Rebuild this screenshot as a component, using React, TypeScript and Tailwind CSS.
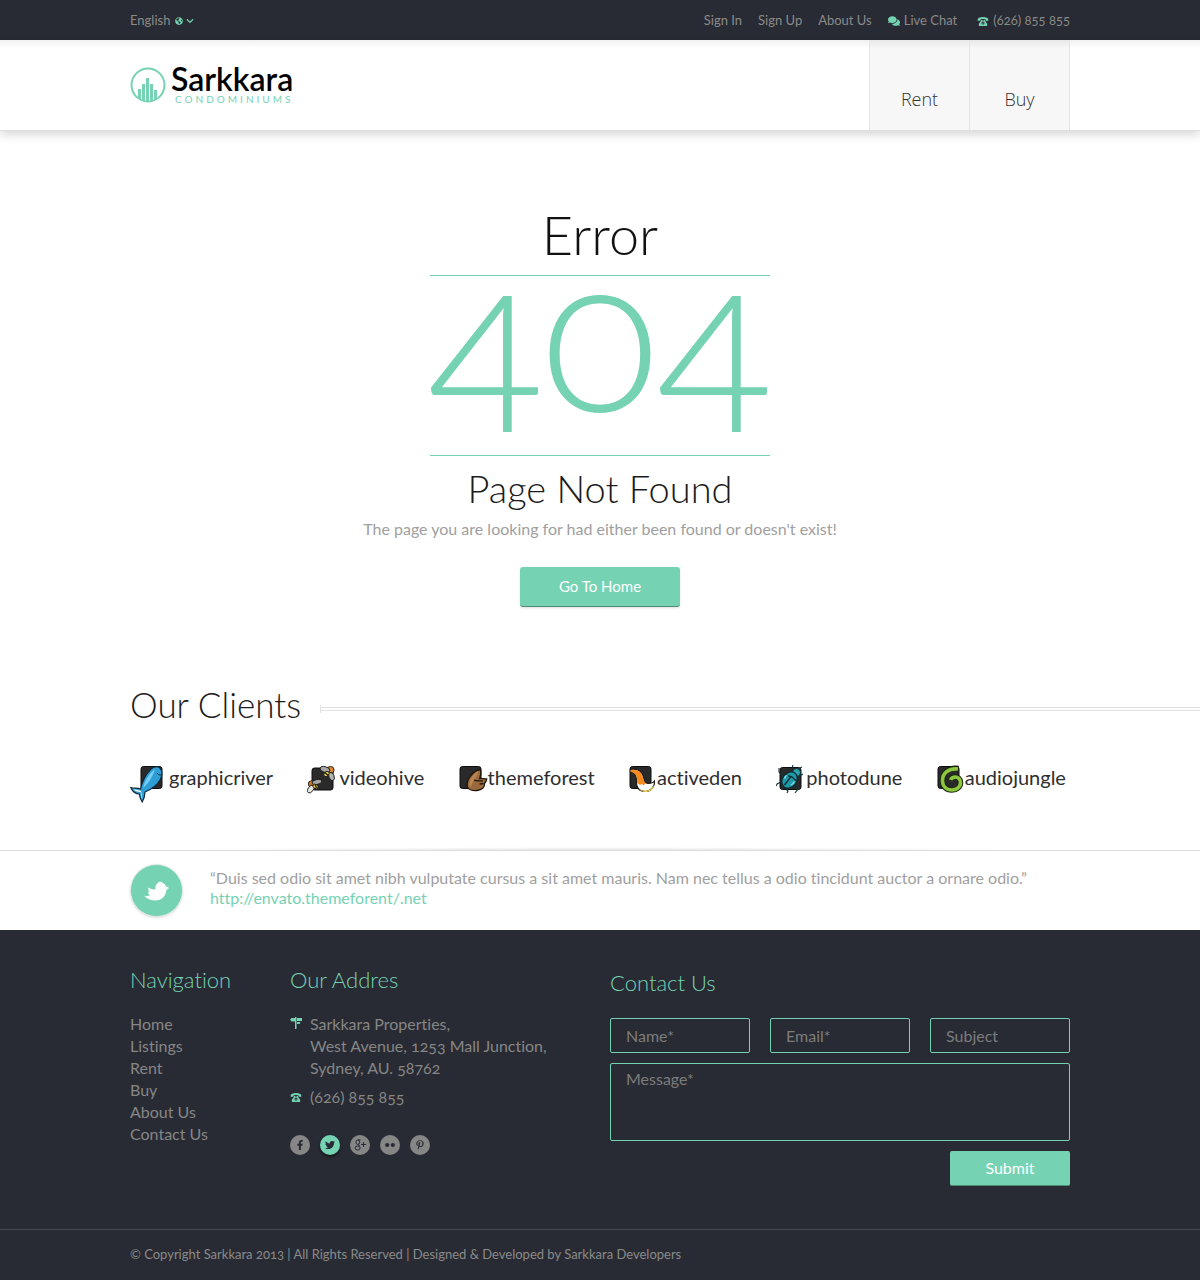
import React from 'react';
import { FaChevronDown, FaComments, FaFacebookF, FaGlobeAmericas, FaPinterestP, FaTwitter } from 'react-icons/fa';

const PhoneIcon: React.FC<{ className?: string }> = ({ className }) => (
  <svg viewBox="0 0 12 10" className={className} fill="currentColor" aria-hidden="true">
    <path d="M0 3.2C0 .9 2.6 0 6 0s6 .9 6 3.2v.9H8.8V2.6C8 2.2 4 2.2 3.2 2.6v1.5H0z" />
    <path fillRule="evenodd" d="M4 3h1v1h2V3h1v1l2.6 3.4V10H1.400V7.400L4 4zM6 5a1.700 1.700 0 1 0 0 3.400A1.700 1.700 0 0 0 6 5z" />
    <circle cx="6" cy="6.700" r=".7" />
  </svg>
);

const SignpostIcon = () => (
  <svg viewBox="0 0 12 12" className="w-3 h-3" fill="currentColor" aria-hidden="true">
    <path d="M5 0h1.500v12H5z" />
    <path d="M0 2.500 1.500 1H5v3.500H1.500z" />
    <path d="M7 1h5v3H7zM7 5h3.500l-1 2H7z" />
  </svg>
);

const LogoMark = () => (
  <svg viewBox="0 0 36 36" className="w-9 h-9" aria-hidden="true">
    <clipPath id="logo-clip">
      <circle cx="18" cy="18" r="16" />
    </clipPath>
    <circle cx="18" cy="18" r="16.500" fill="none" stroke="#75d2b3" strokeWidth="2" />
    <path
      clipPath="url(#logo-clip)"
      fill="#75d2b3"
      d="M8 22h3v14H8zM12 17h3v19h-3zM16 11h3v25h-3zM20 17h3v19h-3zM24 23h3v13h-3z"
    />
  </svg>
);

const BirdIcon = () => (
  <svg viewBox="0 0 26 20" className="w-[26px] h-5" fill="#fff" aria-hidden="true">
    <path d="M0 14.500c2.500.9 4.800.6 6.300-.4C4.500 13.500 4 12 4.200 10.800l1.500.2C4.300 9.800 4 8.200 4.500 6.600c2 1.600 4.300 2.200 6.900 1.900C11 5 12.500 1.800 16.500.2l.3 1.200L18.500.5l-.3 1.400c2.200.4 3.600 1.900 3.900 4l3.200-.5-2.200 1.800 2.300.5-3 1.100C22 15 18 19.500 11.500 19.500 7 19.500 2.600 18 0 14.500z" />
  </svg>
);

const GooglePlusIcon = () => (
  <svg viewBox="0 0 12 12" className="w-3 h-3" fill="none" stroke="currentColor" aria-hidden="true">
    <ellipse cx="3.800" cy="3.200" rx="1.900" ry="2.200" />
    <ellipse cx="3.600" cy="9" rx="2.600" ry="2" />
    <path d="M4 .9h2.500M4.500 5.200 5.500 7.500M9.500 3v5M7 5.500h5" />
  </svg>
);

const FlickrIcon = () => (
  <svg viewBox="0 0 12 12" className="w-3 h-3" fill="currentColor" aria-hidden="true">
    <circle cx="3.200" cy="6" r="2.100" />
    <circle cx="8.800" cy="6" r="2.100" />
  </svg>
);

const GraphicRiverMark = () => (
  <svg viewBox="0 0 35 38" className="w-[35px] h-[38px]" aria-hidden="true">
    <rect x="11" y="1.500" width="21" height="22" rx="2.500" fill="#2b2a2a" stroke="#0d0d0d" />
    <path
      d="M29.500 2.500c3 3 3.200 8 .5 12.500-3 5.200-9 9.500-15 12-.2 3.500-1 7-2.800 10-1.800-2.500-2.700-5-2.700-8C5.500 29 2.300 26 .8 22.500c3 .9 6.500.5 9.700 1.500 1.500-7 5-14.500 10.500-20 2.500-2.200 6-3 8.500-1.500z"
      fill="#2d9fd6"
      stroke="#102737"
      strokeWidth="1.200"
    />
    <path d="M13 23C15 15 19 9 25 4c-2 6-5 13-12 19z" fill="#78cdf2" />
    <path d="M3 24.500c3 .5 6 .5 8 1.500l1.200 8c-1.200-2-1.300-5-1.700-7-3-.2-5.500-1-7.500-2.500z" fill="#fff" />
    <path d="M27 8c1 1.500 2.300 2 4 2" fill="none" stroke="#102737" />
  </svg>
);

const VideoHiveMark = () => (
  <svg viewBox="0 0 30 38" className="w-[30px] h-[38px]" aria-hidden="true">
    <rect x="5" y="3" width="21" height="22" rx="2.500" fill="#2b2a2a" stroke="#0d0d0d" />
    <g stroke="#1a1a1a" strokeWidth=".9">
      <circle cx="23.500" cy="5" r="3.600" fill="#d9852b" />
      <ellipse cx="18" cy="4.500" rx="5" ry="2.800" transform="rotate(15 18 4.500)" fill="#a7a7a4" />
      <ellipse cx="24.500" cy="11.500" rx="2.600" ry="4.300" transform="rotate(-20 24.500 11.500)" fill="#b4b4b0" />
      <ellipse cx="19.500" cy="9" rx="3" ry="2.200" transform="rotate(-45 19.500 9)" fill="#f0d23a" />
      <circle cx="4.500" cy="19" r="3.200" fill="#c9752a" />
      <ellipse cx="10" cy="17" rx="4.800" ry="2.400" transform="rotate(-10 10 17)" fill="#a7a7a4" />
      <ellipse cx="3.800" cy="24" rx="2.600" ry="4.400" transform="rotate(35 3.800 24)" fill="#e4e4df" />
      <ellipse cx="8.500" cy="21.500" rx="2.800" ry="2" transform="rotate(35 8.500 21.500)" fill="#f0d23a" />
    </g>
    <path d="m18 7.500 3 3M8 19.500l1.500 3.500" stroke="#1a1a1a" strokeWidth="1.200" />
  </svg>
);

const ThemeForestMark = () => (
  <svg viewBox="0 0 29 38" className="w-[29px] h-[38px]" aria-hidden="true">
    <rect x="1" y="1.500" width="21" height="22" rx="2.500" fill="#2b2a2a" stroke="#0d0d0d" />
    <path
      d="M21.500 4.500c.8 3 .4 6-.8 9 2.300-.4 4.300.6 7 .4-.3 2-1 3.400-2.200 4.600.5 4-2.500 6.500-7.500 7-4.500.4-9.500-.8-9.900-5C7.800 15 13 5.500 21.500 4.500z"
      fill="#9a6a3c"
      stroke="#20150c"
      strokeWidth="1.300"
    />
    <path d="M10 21c0-6 4-12 9.500-15-1 6-6 10-7.500 16z" fill="#b98450" />
    <path d="M15 15c2 1.500 6 .8 9 .8M24.500 18.500l-4 .5" fill="none" stroke="#20150c" strokeWidth="1.300" />
  </svg>
);

const ActiveDenMark = () => (
  <svg viewBox="0 0 28 38" className="w-7 h-[38px]" aria-hidden="true">
    <rect x="1" y="1.500" width="21" height="22" rx="2.500" fill="#2b2a2a" stroke="#0d0d0d" />
    <path
      d="M1.500 4.500c7-1.500 12 2 13 8 .5 3 1.500 6 4.500 6 2.500 0 5-.5 6.500-2.500.5 6-4 10.500-9.500 10.500-6 0-9-4.500-8.500-10C8 11 6 7.500 1.500 7z"
      fill="#fff"
      stroke="#171310"
      strokeWidth="1.100"
    />
    <path d="M1.500 5c7-1.200 11.500 2 12.500 7.500.5 3 1.500 5.500 4 6.500l-2.200-.2-1 2-2-2-1.800 1.200-2.800-2C8.500 12 6.500 7.500 1.500 6.800z" fill="#f58a1f" />
    <path d="M10 24c5 3.500 12 2 15-4-.5 5-4.500 7-8.500 7-3 0-5-1-6.500-3z" fill="#f4cf4a" />
  </svg>
);

const PhotoDuneMark = () => (
  <svg viewBox="0 0 28 38" className="w-7 h-[38px]" aria-hidden="true">
    <rect x="4" y="2.500" width="21" height="22" rx="2.500" fill="#2b2a2a" stroke="#0d0d0d" />
    <path
      d="M7 11 3 7V3M5 17l-4 2-1 2M10 24l2 2-1 2M22 12l5-3M19 21l3 3-3 4M16 3l1-3M22 4l4-2"
      fill="none"
      stroke="#14363c"
      strokeWidth="1.100"
    />
    <circle cx="20.500" cy="7.500" r="4" fill="#2aa3ad" stroke="#0b2a30" />
    <ellipse cx="13.500" cy="15" rx="7" ry="8.800" transform="rotate(38 13.500 15)" fill="#1f9aa8" stroke="#0b2a30" strokeWidth="1.200" />
    <path d="M15 11.500 8.500 20M10 9.500c2 1.500 3.500 2 5 2s3 3.500 5.500 4" fill="none" stroke="#0b2a30" strokeWidth="1.300" />
    <path d="M8.500 13.500c.5-2 1.500-3 3-3.500M15 20c1.700-.9 2.700-2 3.400-3.600" fill="none" stroke="#8fe3e8" strokeWidth="1.300" />
  </svg>
);

const AudioJungleMark = () => (
  <svg viewBox="0 0 28 38" className="w-7 h-[38px]" aria-hidden="true">
    <rect x="1" y="1.500" width="21" height="22" rx="2.500" fill="#2b2a2a" stroke="#0d0d0d" />
    <path
      d="M21.500 3.500C12 2 5.500 8 5.500 15.500c0 6 4 9.500 9.300 9.500 5 0 8.700-3.200 8.700-7.500 0-3.800-2.800-5.700-5.800-5.400-2.200.2-3.700 1.400-4.200 3.400"
      fill="none"
      stroke="#17230b"
      strokeWidth="5.600"
    />
    <path
      d="M21 4C12 3 5.500 8 5.500 15.500c0 6 4 9.500 9.300 9.500 5 0 8.700-3.200 8.700-7.500 0-3.800-2.800-5.700-5.800-5.400-2 .2-3.500 1.200-4 2.900"
      fill="none"
      stroke="#8cc63f"
      strokeWidth="3.600"
    />
  </svg>
);

const clients = [
  { name: 'graphicriver', mark: GraphicRiverMark, gap: 'gap-1' },
  { name: 'videohive', mark: VideoHiveMark, gap: 'gap-0.5' },
  { name: 'themeforest', mark: ThemeForestMark, gap: 'gap-0' },
  { name: 'activeden', mark: ActiveDenMark, gap: 'gap-0' },
  { name: 'photodune', mark: PhotoDuneMark, gap: 'gap-0.5' },
  { name: 'audiojungle', mark: AudioJungleMark, gap: 'gap-0' },
];

const navigation = ['Home', 'Listings', 'Rent', 'Buy', 'About Us', 'Contact Us'];

const socials = [
  { name: 'Facebook', icon: <FaFacebookF className="w-2.5 h-2.5" />, active: false },
  { name: 'Twitter', icon: <FaTwitter className="w-2.5 h-2.5" />, active: true },
  { name: 'Google Plus', icon: <GooglePlusIcon />, active: false },
  { name: 'Flickr', icon: <FlickrIcon />, active: false },
  { name: 'Pinterest', icon: <FaPinterestP className="w-2.5 h-2.5" />, active: false },
];

const container = 'w-full max-w-[940px] mx-auto';
const footerTitle = 'text-[22px] leading-6 font-light text-[#75d2b3]';
const field =
  'block w-full bg-transparent border border-[#75d2b3] rounded-xs px-[15px] text-base text-[#868686] placeholder:text-[#7c7c7c] focus:outline-none';

const TopBar = () => (
  <div className="bg-[#282b33] text-[13px] text-[#8a8a8a]">
    <div className={`${container} h-10 pt-0.5 flex items-center justify-between`}>
      <div className="flex items-center text-[#75d2b3]">
        <label htmlFor="language" className="sr-only">Language</label>
        <select id="language" className="appearance-none bg-transparent h-6 text-[#8a8a8a] mr-1">
          <option>English</option>
        </select>
        <FaGlobeAmericas className="w-2 h-2 mr-[3px]" />
        <FaChevronDown className="w-2 h-2" />
      </div>
      <nav className="flex items-center gap-4">
        <a href="#signin">Sign In</a>
        <a href="#signup">Sign Up</a>
        <a href="#about">About Us</a>
        <a href="#chat" className="flex items-center gap-1">
          <FaComments className="w-3 h-3 text-[#75d2b3]" />
          Live Chat
        </a>
        <a href="#phone" className="ml-1 flex items-center gap-1 oldstyle-nums">
          <PhoneIcon className="w-3 h-[9px] text-[#75d2b3]" />
          (626) 855 855
        </a>
      </nav>
    </div>
  </div>
);

const Header = () => (
  <header className="bg-white border-b border-[#e0e0e0] shadow-[0_3px_10px_rgba(0,0,0,0.18)]">
    <div className="bg-linear-to-b from-black/6 to-transparent to-[8px]">
      <div className={`${container} h-[90px] flex justify-between`}>
        <a href="#home" className="flex items-center gap-[5px]">
          <LogoMark />
          <span className="flex flex-col">
            <span className="text-[32px] leading-7 font-semibold text-black">Sarkkara</span>
            <span className="pl-1 text-[10px] leading-3 tracking-[3px] text-[#75d2b3]">CONDOMINIUMS</span>
          </span>
        </a>
        <nav className="flex font-['Open_Sans',sans-serif] font-light text-lg text-[#333] border-l border-[#e4e4e4]">
          {['Rent', 'Buy'].map((item) => (
            <a
              key={item}
              href="#listings"
              className="w-[100px] bg-black/3 border-r border-[#e4e4e4] flex items-end justify-center pb-[17px]"
            >
              {item}
            </a>
          ))}
        </nav>
      </div>
    </div>
  </header>
);

const ErrorMessage = () => (
  <section className="flex flex-col items-center pt-[72px] pb-[78px] text-center">
    <h1 className="text-[54px] leading-[64px] font-light text-[#111]">Error</h1>
    <p className="w-[340px] mt-2 h-[181px] border-y border-[#75d2b3] flex items-start justify-center text-[212px] leading-[108px] font-light oldstyle-nums text-[#75d2b3]">
      404
    </p>
    <h2 className="mt-[10px] text-[38px] leading-[44px] font-light text-[#1c1c1c]">Page Not Found</h2>
    <p className="mt-2 text-base leading-[22px] text-[#a0a0a0]">
      The page you are looking for had either been found or doesn't exist!
    </p>
    <button
      type="button"
      className="mt-[27px] w-40 h-10 rounded-[3px] bg-[#75d2b3] border-b border-[#4c8c77] shadow-sm text-[15px] text-white"
    >
      Go To Home
    </button>
  </section>
);

const Clients = () => (
  <section>
    <div className="h-12 flex items-center pl-[max(0px,calc(50%-470px))]">
      <h2 className="w-[190px] self-start text-[35px] leading-[38px] font-light text-[#1c1c1c]">Our Clients</h2>
      <div className="flex-1 h-2 flex items-center border-l border-[#e2e2e2]">
        <div className="w-full h-1 border-y border-[#e2e2e2]" />
      </div>
    </div>
    <ul className={`${container} mt-8 flex justify-between items-start pr-1`}>
      {clients.map(({ name, mark: Mark, gap }) => (
        <li key={name} className={`flex items-start ${gap} text-xl leading-6 text-[#2e2e2e]`}>
          <Mark />
          {name}
        </li>
      ))}
    </ul>
    <div className="mt-[43px] h-1 bg-[radial-gradient(ellipse_at_bottom,rgba(0,0,0,0.1),transparent_50%)]" />
  </section>
);

const Tweet = () => (
  <section className="border-t border-[#dcdcdc]">
    <div className={`${container} h-[79px] flex items-center`}>
      <div className="w-[53px] h-[53px] mr-[27px] rounded-full bg-[#75d2b3] border border-[#e4ebe8] shadow-sm flex items-center justify-center">
        <BirdIcon />
      </div>
      <div className="pb-1.5 text-base leading-5 text-[#a0a0a0]">
        <p>“Duis sed odio sit amet nibh vulputate cursus a sit amet mauris. Nam nec tellus a odio tincidunt auctor a ornare odio.”</p>
        <a href="#tweet" className="text-[#75d2b3]">http://envato.themeforent/.net</a>
      </div>
    </div>
  </section>
);

const Footer = () => (
  <footer className="bg-[#282b33] text-base text-[#868686]">
    <div className={`${container} pt-[38px] pb-[43px] flex`}>
      <div className="w-40">
        <h3 className={footerTitle}>Navigation</h3>
        <ul className="mt-[21px] leading-[22px]">
          {navigation.map((item) => (
            <li key={item}>
              <a href="#nav">{item}</a>
            </li>
          ))}
        </ul>
      </div>
      <div className="w-80">
        <h3 className={footerTitle}>Our Addres</h3>
        <div className="mt-[21px] flex gap-2 text-[#75d2b3]">
          <div className="pt-1"><SignpostIcon /></div>
          <address className="not-italic leading-[22px] oldstyle-nums text-[#868686]">
            Sarkkara Properties,<br />
            West Avenue, 1253 Mall Junction,<br />
            Sydney, AU. 58762
          </address>
        </div>
        <div className="mt-[7px] flex items-center gap-2 leading-[22px] text-[#75d2b3]">
          <PhoneIcon className="w-3 h-[9px]" />
          <span className="oldstyle-nums text-[#868686]">(626) 855 855</span>
        </div>
        <ul className="mt-[27px] flex gap-[10px]">
          {socials.map(({ name, icon, active }) => (
            <li key={name}>
              <a
                href="#social"
                aria-label={name}
                className={`w-5 h-5 rounded-full flex items-center justify-center text-[#282b33] ${
                  active ? 'bg-[#75d2b3] shadow-[0_2px_3px_rgba(0,0,0,0.5)]' : 'bg-[#868686]'
                }`}
              >
                {icon}
              </a>
            </li>
          ))}
        </ul>
      </div>
      <form className="flex-1 pt-[3px]">
        <h3 className={footerTitle}>Contact Us</h3>
        <div className="mt-[23px] grid grid-cols-3 gap-x-5 gap-y-[10px]">
          <input aria-label="Name" placeholder="Name*" className={`${field} h-[35px]`} />
          <input aria-label="Email" type="email" placeholder="Email*" className={`${field} h-[35px]`} />
          <input aria-label="Subject" placeholder="Subject" className={`${field} h-[35px]`} />
          <textarea aria-label="Message" placeholder="Message*" className={`${field} col-span-3 h-[78px] pt-[3px] resize-none`} />
        </div>
        <button
          type="submit"
          className="mt-[10px] ml-auto block w-[120px] h-[35px] rounded-xs bg-[#75d2b3] border-b border-[#4c8c77] text-white"
        >
          Submit
        </button>
      </form>
    </div>
    <div className="border-t border-[#44474e]">
      <p className={`${container} h-[50px] flex items-center text-[13px] oldstyle-nums text-[#8a8a8a]`}>
        © Copyright Sarkkara 2013 | All Rights Reserved | Designed &amp; Developed by Sarkkara Developers
      </p>
    </div>
  </footer>
);

const App: React.FC = () => {
  return (
    <div className="min-h-screen bg-white font-['Lato',sans-serif] [font-variant-ligatures:no-common-ligatures]">
      <TopBar />
      <Header />
      <main>
        <ErrorMessage />
        <Clients />
        <Tweet />
      </main>
      <Footer />
    </div>
  );
};

export default App;
